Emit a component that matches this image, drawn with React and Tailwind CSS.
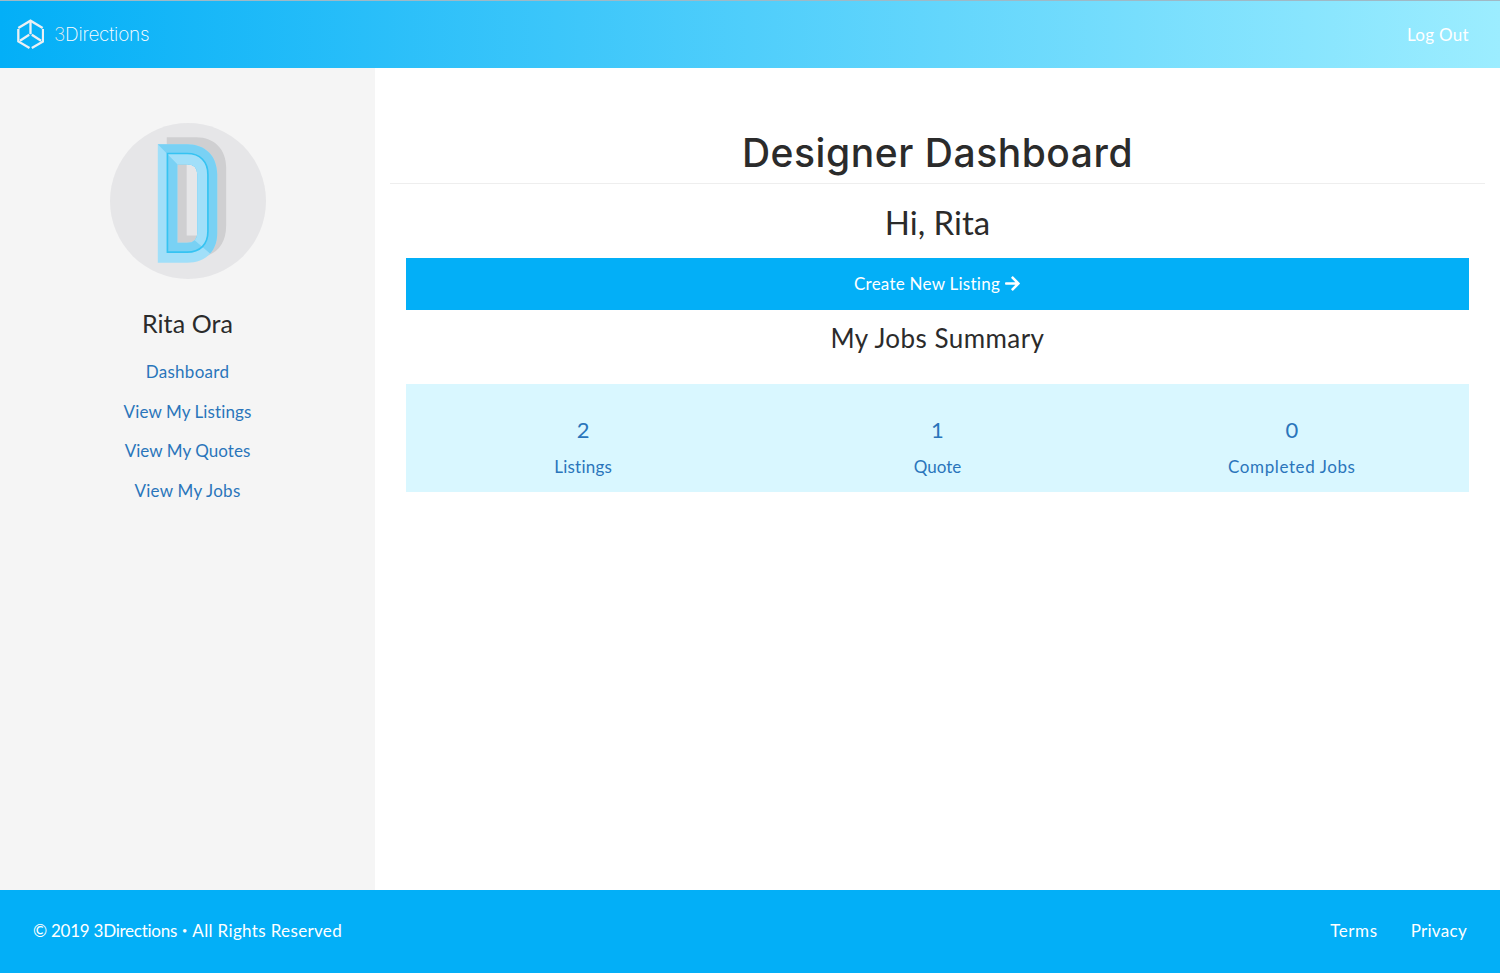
import React from "react";
import { FaArrowRight } from "react-icons/fa";

function LogoMark() {
  return (
    <svg viewBox="51 54 82 92" className="h-[31px] w-[27px]" fill="none" stroke="#eaf0f4" strokeWidth="7">
      <path d="M55 80 L92 58 L129 80 M130 83 V121 L96 141 M89 141 L55 121 V83" />
      <path d="M92 60 V99 M88 101 L60 119 M96 101 L124 119" />
    </svg>
  );
}

function Avatar() {
  return (
    <svg viewBox="28 21 470 470" className="h-[156px] w-[156px]">
      <defs>
        <clipPath id="lit">
          <path d="M174 87 L233 147 L285 376 L345 428 H400 V60 H174Z" />
        </clipPath>
      </defs>
      <circle cx="263" cy="256" r="235" fill="#e6e6e8" />
      <g transform="translate(-2 -2)">
        <path fillRule="evenodd" fill="#cfcfd1" d="M201 66 H290 C345 66 380 103 380 157 V330 Q380 400 325 422 H201Z M261 126 V362 H293 V126Z" />
        <path fillRule="evenodd" fill="#a1dff9" d="M174 87 H262 C318 87 353 123 353 178 V355 C353 409 318 444 262 444 H174Z M233 147 V384 H262 Q293 384 293 355 V178 Q293 147 262 147Z" />
        <path fillRule="evenodd" fill="#79d1f4" clipPath="url(#lit)" d="M174 87 H262 C318 87 353 123 353 178 V355 C353 409 318 444 262 444 H174Z M233 147 V384 H262 Q293 384 293 355 V178 Q293 147 262 147Z" />
        <path fillRule="evenodd" fill="#79d1f4" d="M203 115 H262 C302 115 325 140 325 178 V350 C325 388 302 412 262 412 H203Z M233 147 V384 H262 Q293 384 293 355 V178 Q293 147 262 147Z" />
        <path fillRule="evenodd" fill="#a1dff9" clipPath="url(#lit)" d="M203 115 H262 C302 115 325 140 325 178 V350 C325 388 302 412 262 412 H203Z M233 147 V384 H262 Q293 384 293 355 V178 Q293 147 262 147Z" />
        <path fill="none" stroke="#35c3f2" strokeWidth="5" d="M203 115 H262 C302 115 325 140 325 178 V350 C325 388 302 412 262 412 H203Z" />
      </g>
    </svg>
  );
}

const links = [
  { label: "Dashboard", spacing: "tracking-[0.3px]" },
  { label: "View My Listings", spacing: "tracking-[0.1px]" },
  { label: "View My Quotes", spacing: "tracking-[0.05px]" },
  { label: "View My Jobs", spacing: "tracking-[0.25px]" },
];
const stats = [
  { count: "2", label: "Listings", spacing: "tracking-[0.2px]" },
  { count: "1", label: "Quote", spacing: "tracking-normal" },
  { count: "0", label: "Completed Jobs", spacing: "tracking-[0.6px]" },
];

export default function App() {
  return (
    <div className="flex h-[973px] w-full flex-col overflow-hidden bg-white font-['Lato',sans-serif] text-[17px] leading-6 text-[#2b2b2b] [font-variant-ligatures:none]">
      <header className="flex h-[68px] shrink-0 items-center justify-between border-t border-[#9fb9c6] bg-linear-to-r/srgb from-[#03aff7] to-[#9cedff] pl-[17px] pr-[31px] text-white">
        <div className="flex items-center gap-[10px]">
          <LogoMark />
          <span className="font-['Inter',sans-serif] text-[19px] font-extralight tracking-[-0.24px]"><span className="text-[#dfe6ec]">3</span>Directions</span>
        </div>
        <a className="tracking-[0.3px]">Log Out</a>
      </header>
      <div className="flex grow">
        <aside className="flex w-[375px] shrink-0 flex-col items-center bg-[#f5f5f5] pt-[55px]">
          <Avatar />
          <h3 className="mt-[28px] text-[25px] leading-8 tracking-[0.1px]">Rita Ora</h3>
          <nav className="mt-[21px] flex flex-col items-center gap-[15.6px] text-[#2a75bb]">
            {links.map((l) => <a key={l.label} className={l.spacing}>{l.label}</a>)}
          </nav>
        </aside>
        <main className="flex grow flex-col px-[15px] pt-[60px] text-center">
          <h1 className="h-[56px] border-b border-[#eee] font-['Inter',sans-serif] text-[39px] font-medium leading-[50px] tracking-[0.55px]">Designer Dashboard</h1>
          <section className="flex flex-col px-4">
            <h2 className="mt-[18px] text-[33px] leading-10">Hi, Rita</h2>
            <button className="mt-[16px] flex h-[52px] items-center justify-center gap-1 bg-[#03aff7] pb-px text-white">
              <span className="tracking-[0.25px]">Create New Listing</span>
              <FaArrowRight className="text-[17px]" />
            </button>
            <h3 className="mt-[12px] text-[26px] leading-8 tracking-[0.45px]">My Jobs Summary</h3>
            <div className="mt-[30px] grid h-[108px] grid-cols-3 bg-[#d9f7ff] pt-[30px] text-[#2a75bb]">
              {stats.map((s) => (
                <a key={s.label} className="flex flex-col items-center">
                  <span className="text-[22px] leading-8">{s.count}</span>
                  <span className={`mt-[9px] ${s.spacing}`}>{s.label}</span>
                </a>
              ))}
            </div>
          </section>
        </main>
      </div>
      <footer className="flex h-[83px] shrink-0 items-center justify-between bg-[#03aff7] px-[33px] pb-px text-white">
        <div className="flex items-center">
          <span className="tracking-[-0.25px]">© 2019 3Directions</span>
          <span className="mx-[5px] text-[9px]">•</span>
          <span className="tracking-[0.35px]">All Rights Reserved</span>
        </div>
        <div className="flex gap-[33px]">
          <a className="tracking-[0.6px]">Terms</a>
          <a className="tracking-[0.3px]">Privacy</a>
        </div>
      </footer>
    </div>
  );
}
